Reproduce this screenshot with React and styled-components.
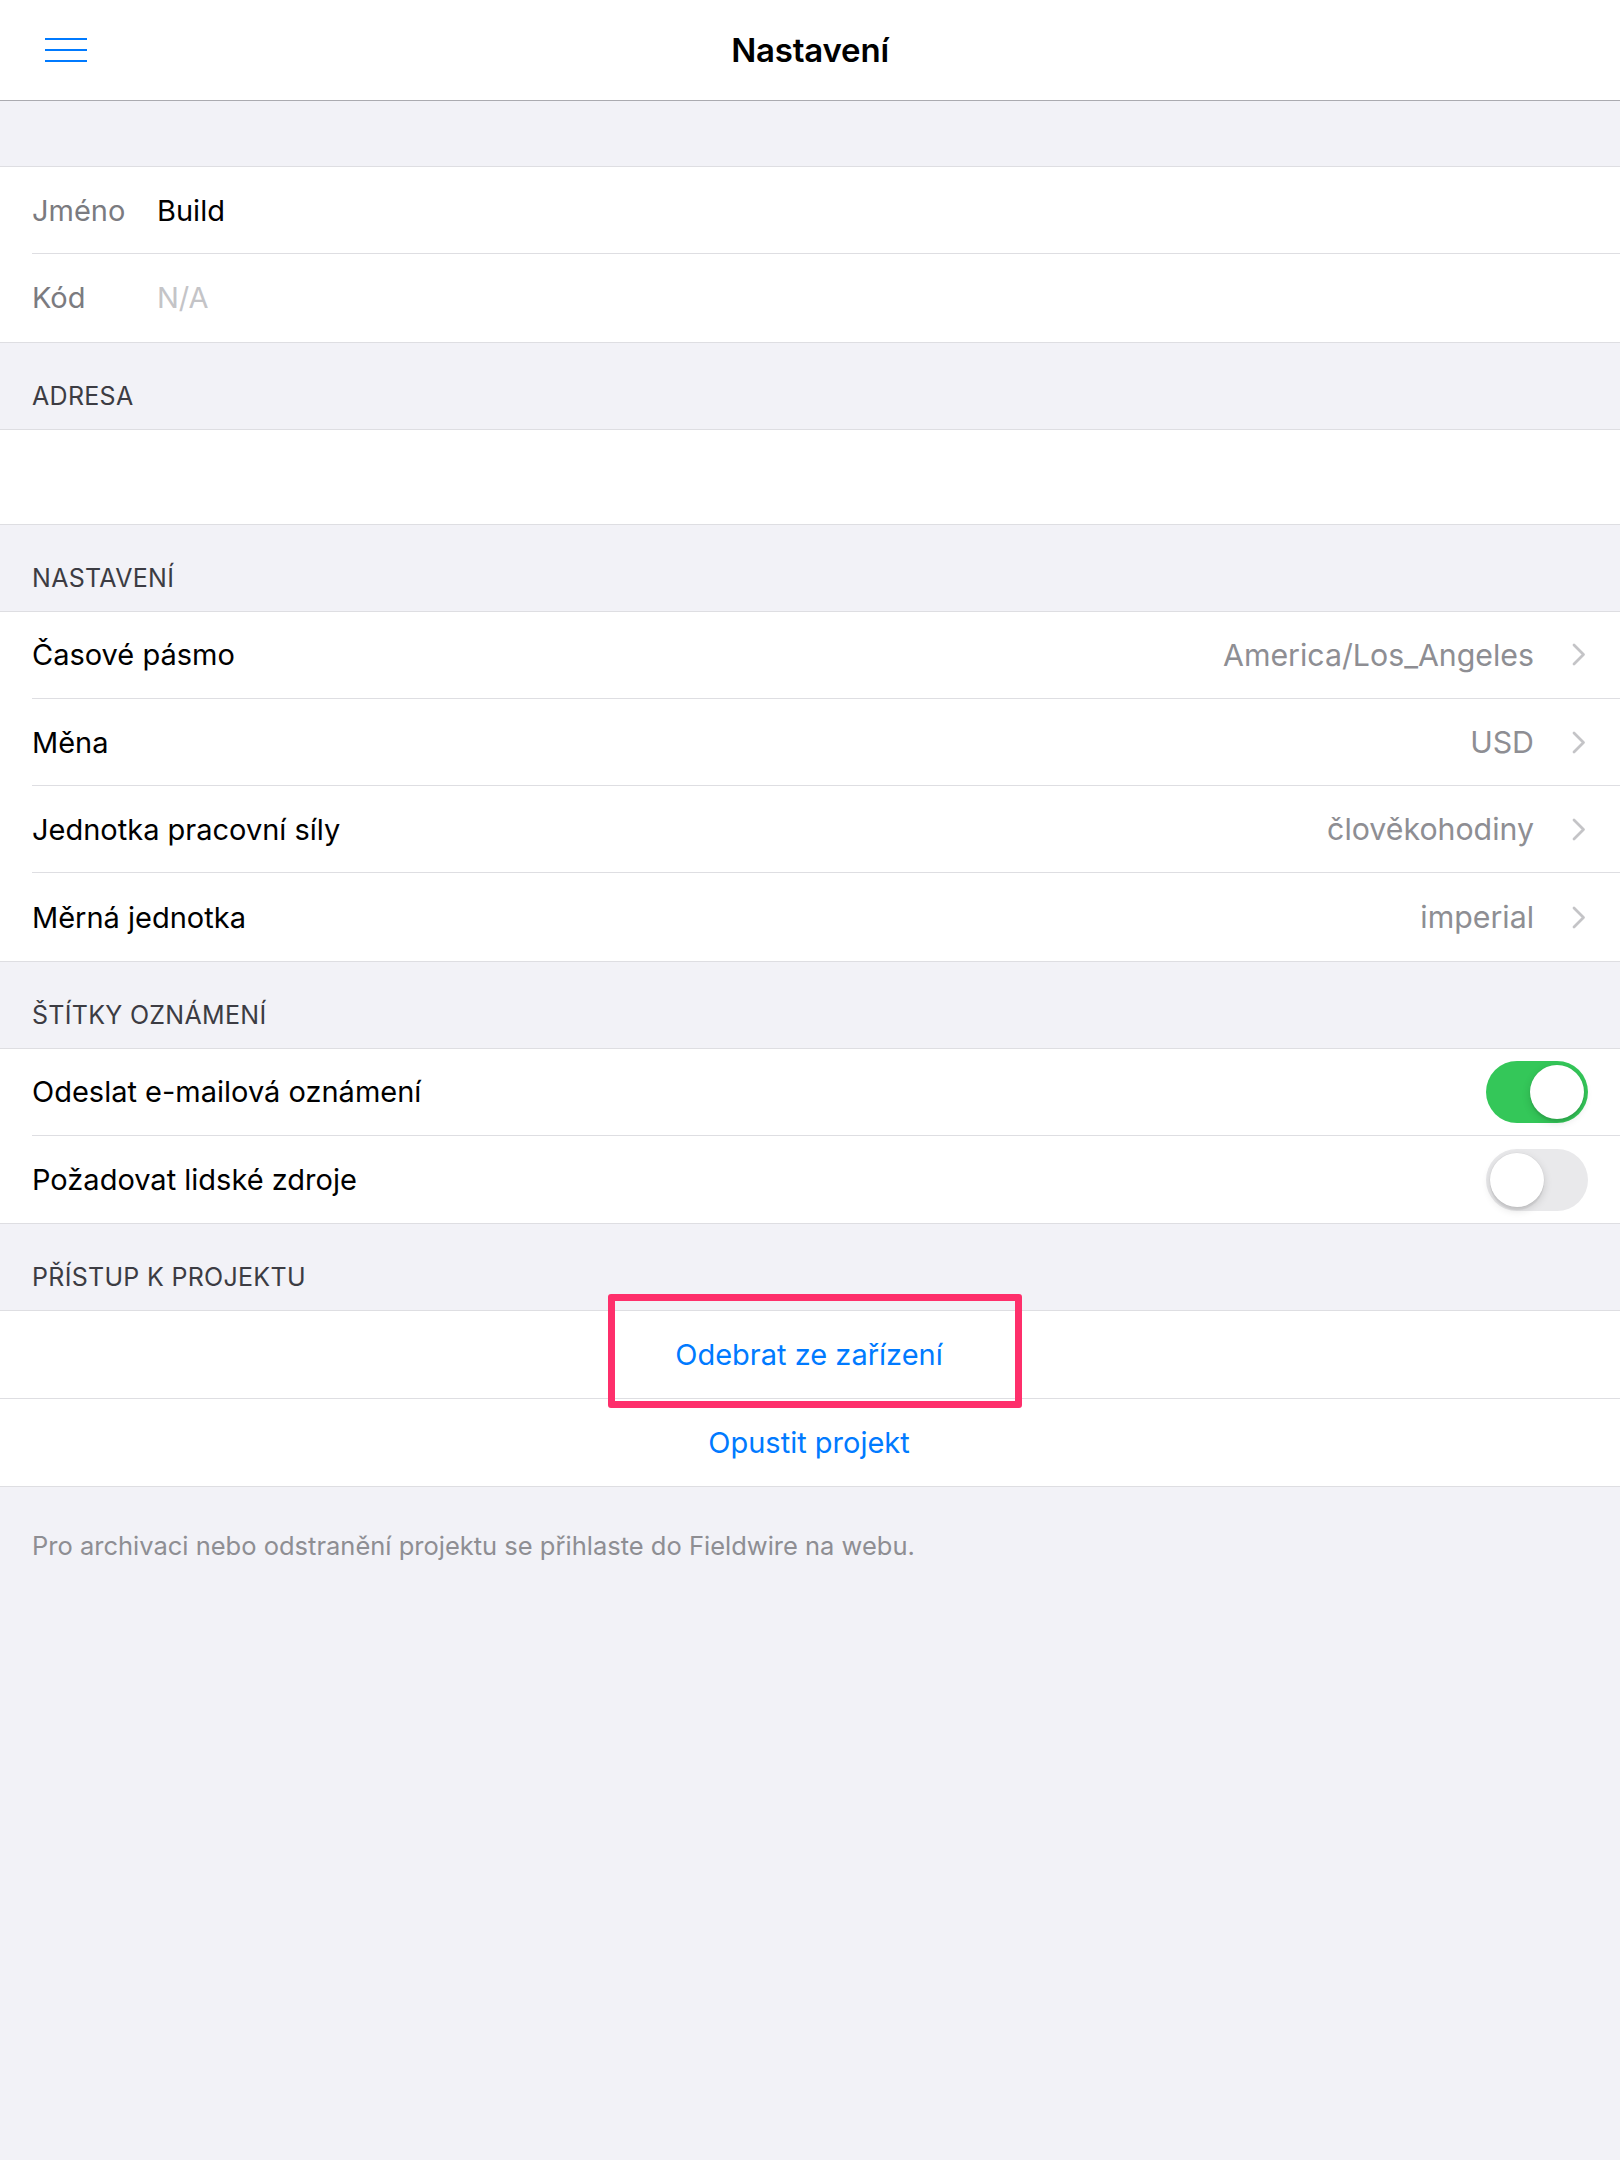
import React from "react";
import styled, { createGlobalStyle } from "styled-components";

const Global = createGlobalStyle`
  html, body { margin: 0; padding: 0; }
  body {
    background: #f2f2f7;
    font-family: Inter, "Noto Sans", "Liberation Sans", sans-serif;
    -webkit-font-smoothing: antialiased;
  }
`;

const Page = styled.div`
  min-height: 2160px;
  background: #f2f2f7;
  display: flex;
  flex-direction: column;
`;

const NavBar = styled.header`
  height: 100px;
  background: #fff;
  border-bottom: 1px solid #ababb0;
  display: grid;
  grid-template-columns: 1fr auto 1fr;
  align-items: center;
  padding: 0 45px;
`;

const MenuButton = styled.button`
  justify-self: start;
  width: 42px;
  height: 24px;
  padding: 0;
  border: 0;
  background: none;
  display: flex;
  flex-direction: column;
  justify-content: space-between;
`;

const MenuLine = styled.span`
  display: block;
  height: 2px;
  width: 100%;
  background: #007aff;
`;

const Title = styled.h1`
  margin: 0;
  font-size: 33px;
  font-weight: 600;
  color: #000;
  letter-spacing: -0.2px;
`;

const TopSpacer = styled.div`
  height: 65px;
`;

const Group = styled.section`
  background: #fff;
  border-top: 1px solid #dedee2;
  border-bottom: 1px solid #dedee2;
`;

const Row = styled.div`
  padding-left: 32px;
  display: flex;
`;

const RowInner = styled.div`
  flex: 1;
  box-sizing: border-box;
  height: ${(p) => p.$h || 87.3}px;
  display: flex;
  align-items: center;
  padding-right: ${(p) => (p.$toggle ? 32 : 34)}px;
  border-bottom: ${(p) => (p.$last ? "none" : "1px solid #dedee2")};
  justify-content: ${(p) => (p.$center ? "center" : "flex-start")};
  margin-left: ${(p) => (p.$center ? "-32px" : "0")};
  padding-left: ${(p) => (p.$center ? "32px" : "0")};
`;

const FieldLabel = styled.span`
  width: 125px;
  font-size: 29px;
  color: #7b7b80;
`;

const FieldValue = styled.span`
  font-size: 29px;
  color: ${(p) => (p.$empty ? "#c4c4c7" : "#000")};
`;

const Label = styled.span`
  flex: 1;
  font-size: 29px;
  color: #000;
`;

const Detail = styled.span`
  font-size: 30.3px;
  color: #8e8e93;
  margin-right: 38px;
`;

const Chevron = styled.svg`
  width: 14px;
  height: 23px;
  flex: none;
`;

const SectionHeader = styled.div`
  height: 86px;
  box-sizing: border-box;
  display: flex;
  align-items: flex-end;
  padding: 0 32px 18px;
  font-size: 25px;
  line-height: 30px;
  color: #3c3c43;
  text-transform: uppercase;
  letter-spacing: 0.3px;
`;

const Track = styled.div`
  width: 102px;
  height: 62px;
  border-radius: 31px;
  background: ${(p) => (p.$on ? "#34c759" : "#e9e9eb")};
  position: relative;
  flex: none;
`;

const Knob = styled.div`
  position: absolute;
  top: 4px;
  left: ${(p) => (p.$on ? "44px" : "4px")};
  width: 54px;
  height: 54px;
  border-radius: 50%;
  background: #fff;
  box-shadow: 0 3px 8px rgba(0, 0, 0, 0.15), 0 3px 1px rgba(0, 0, 0, 0.06),
    0 0 0 0.5px rgba(0, 0, 0, 0.04);
`;

const ActionButton = styled.button`
  border: 0;
  background: none;
  padding: 0;
  font-family: inherit;
  font-size: 29px;
  color: #007aff;
  position: relative;
`;

const Highlight = styled.span`
  position: absolute;
  left: -67px;
  right: -79px;
  top: -43px;
  bottom: -36px;
  border: 7px solid #fe2f6b;
  border-radius: 3px;
  pointer-events: none;
`;

const Footer = styled.p`
  margin: 0;
  padding: 44px 32px 0;
  font-size: 25.5px;
  line-height: 30px;
  color: #8e8e93;
`;

const Toggle = ({ on }) => (
  <Track $on={on}>
    <Knob $on={on} />
  </Track>
);

const ChevronIcon = () => (
  <Chevron viewBox="0 0 14 23">
    <path d="M2 2 L11.5 11.5 L2 21" fill="none" stroke="#c4c4c7" strokeWidth="2.8" strokeLinecap="round" strokeLinejoin="round" />
  </Chevron>
);

const settings = [
  ["Časové pásmo", "America/Los_Angeles"],
  ["Měna", "USD"],
  ["Jednotka pracovní síly", "člověkohodiny"],
  ["Měrná jednotka", "imperial"],
];

export default function App() {
  return (
    <Page>
      <Global />
      <NavBar>
        <MenuButton aria-label="menu">
          <MenuLine />
          <MenuLine />
          <MenuLine />
        </MenuButton>
        <Title>Nastavení</Title>
        <span />
      </NavBar>
      <TopSpacer />
      <Group>
        <Row>
          <RowInner>
            <FieldLabel>Jméno</FieldLabel>
            <FieldValue>Build</FieldValue>
          </RowInner>
        </Row>
        <Row>
          <RowInner $last>
            <FieldLabel>Kód</FieldLabel>
            <FieldValue $empty>N/A</FieldValue>
          </RowInner>
        </Row>
      </Group>
      <SectionHeader>Adresa</SectionHeader>
      <Group>
        <Row>
          <RowInner $last $h={94} />
        </Row>
      </Group>
      <SectionHeader>Nastavení</SectionHeader>
      <Group>
        {settings.map(([l, v], i) => (
          <Row key={l}>
            <RowInner $last={i === settings.length - 1}>
              <Label>{l}</Label>
              <Detail>{v}</Detail>
              <ChevronIcon />
            </RowInner>
          </Row>
        ))}
      </Group>
      <SectionHeader>Štítky oznámení</SectionHeader>
      <Group>
        <Row>
          <RowInner $toggle>
            <Label>Odeslat e-mailová oznámení</Label>
            <Toggle on />
          </RowInner>
        </Row>
        <Row>
          <RowInner $toggle $last>
            <Label>Požadovat lidské zdroje</Label>
            <Toggle />
          </RowInner>
        </Row>
      </Group>
      <SectionHeader>Přístup k projektu</SectionHeader>
      <Group>
        <Row>
          <RowInner $center>
            <ActionButton>
              Odebrat ze zařízení
              <Highlight />
            </ActionButton>
          </RowInner>
        </Row>
        <Row>
          <RowInner $center $last>
            <ActionButton>Opustit projekt</ActionButton>
          </RowInner>
        </Row>
      </Group>
      <Footer>Pro archivaci nebo odstranění projektu se přihlaste do Fieldwire na webu.</Footer>
    </Page>
  );
}
